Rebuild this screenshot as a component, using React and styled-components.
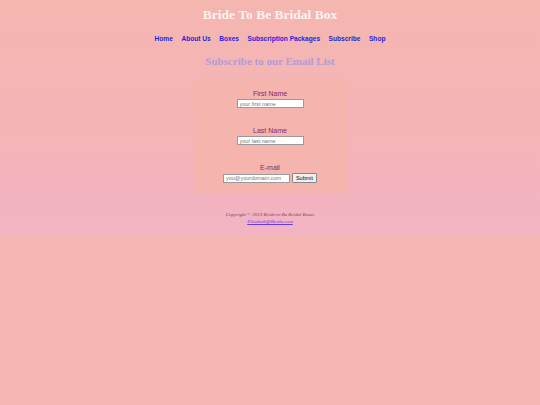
import React from "react";
import styled, { createGlobalStyle } from "styled-components";

const Global = createGlobalStyle`
  html, body { margin: 0; padding: 0; background: #f5b7b1; }
  body { font-family: "Liberation Serif", serif; }
`;

const Page = styled.div`
  background: linear-gradient(to bottom, #f5b6b0 0%, #f4b4b8 60%, #f2b3c4 100%);
  padding: 7px 0 10px;
  display: flex;
  flex-direction: column;
  align-items: center;
`;

const Title = styled.h1`
  margin: 0;
  font-family: "Liberation Serif", serif;
  font-weight: bold;
  font-size: 13.5px;
  line-height: 16px;
  color: #fdf3f2;
`;

const Nav = styled.nav`
  display: flex;
  gap: 8.5px;
  margin-top: 12px;
`;

const NavLink = styled.a`
  font-family: "Comic Sans MS", "Liberation Sans", sans-serif;
  font-weight: bold;
  font-size: 6.6px;
  line-height: 8px;
  color: #2a1fd6;
  text-decoration: none;
`;

const SubTitle = styled.h2`
  margin: 12px 0 0;
  font-family: "Liberation Serif", serif;
  font-weight: bold;
  font-size: 11px;
  line-height: 13px;
  color: #b59ad8;
`;

const FormBox = styled.form`
  margin-top: 11px;
  width: 155px;
  background: #f5b5ae;
  padding: 10px 0 11px;
  display: flex;
  flex-direction: column;
  align-items: center;
  gap: 18px;
`;

const Field = styled.div`
  display: flex;
  flex-direction: column;
  align-items: center;
  gap: 1px;
`;

const Label = styled.label`
  font-family: "Comic Sans MS", "Liberation Sans", sans-serif;
  font-size: 7px;
  line-height: 9px;
  color: #86286a;
`;

const Row = styled.div`
  display: flex;
  align-items: center;
  gap: 2px;
`;

const Input = styled.input`
  box-sizing: border-box;
  width: ${(p) => p.$w}px;
  height: 9px;
  padding: 0 2px;
  border: 1px solid #9a9a9a;
  background: #fff;
  font-family: "Liberation Sans", sans-serif;
  font-size: 5.5px;
  outline: none;
  &::placeholder { color: #777; }
`;

const Submit = styled.button`
  box-sizing: border-box;
  height: 10px;
  width: 25px;
  padding: 0;
  border: 1px solid #888;
  border-radius: 1px;
  background: #efefef;
  font-family: "Liberation Sans", sans-serif;
  font-size: 5.5px;
  color: #111;
`;

const Footer = styled.footer`
  margin-top: 18px;
  display: flex;
  flex-direction: column;
  align-items: center;
  font-family: "Liberation Serif", serif;
  font-style: italic;
  font-size: 5px;
  line-height: 6.5px;
  color: #7a3a66;
`;

const Mail = styled.a`
  color: #6a3ad8;
  text-decoration: underline;
`;

export default function App() {
  const links = ["Home", "About Us", "Boxes", "Subscription Packages", "Subscribe", "Shop"];
  return (
    <>
      <Global />
      <Page>
        <Title>Bride To Be Bridal Box</Title>
        <Nav>
          {links.map((l) => (
            <NavLink key={l} href="#">{l}</NavLink>
          ))}
        </Nav>
        <SubTitle>Subscribe to our Email List</SubTitle>
        <FormBox onSubmit={(e) => e.preventDefault()}>
          <Field>
            <Label>First Name</Label>
            <Input $w={67} placeholder="your first name" />
          </Field>
          <Field>
            <Label>Last Name</Label>
            <Input $w={67} placeholder="your last name" />
          </Field>
          <Field>
            <Label>E-mail</Label>
            <Row>
              <Input $w={67} placeholder="you@yourdomain.com" />
              <Submit type="submit">Submit</Submit>
            </Row>
          </Field>
        </FormBox>
        <Footer>
          <span>Copyright © 2019 Bride-to-Be Bridal Boxes</span>
          <Mail href="#">Elizabeth@Bestlu.com</Mail>
        </Footer>
      </Page>
    </>
  );
}
